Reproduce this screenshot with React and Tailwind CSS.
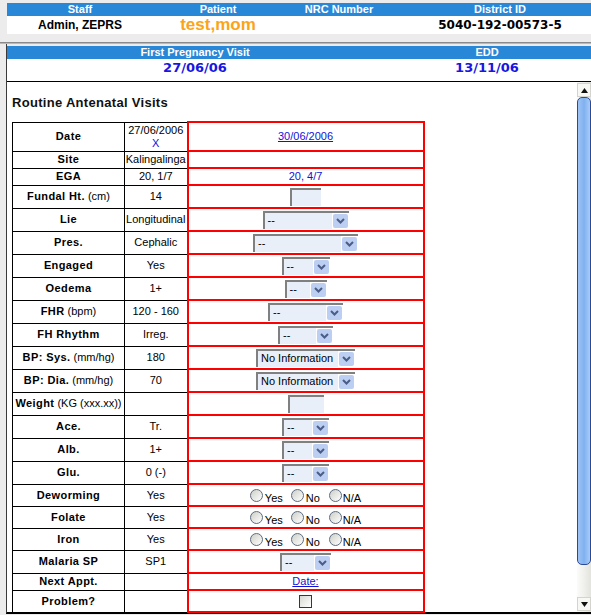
import React from "react";

const SANS = "font-['Liberation_Sans',Arial,sans-serif]";
const WIDE = "font-['DejaVu_Sans',Verdana,sans-serif]";

// dropdown like the old XP selects
function Select({ w, value = "--" }) {
  return (
    <div className={`${w} mx-auto flex h-[18px] border-t-2 border-l-2 border-[#808080] bg-white`}>
      <span className="flex-1 overflow-hidden whitespace-nowrap bg-[#e9eff9] pl-[3px] text-left text-[11px] leading-[15px] text-black">
        {value}
      </span>
      <span className="m-[1px] flex w-[15px] items-center justify-center rounded-[2px] bg-[#bccff2]">
        <svg width="9" height="6" viewBox="0 0 9 6">
          <path d="M1 1 L4.5 4.5 L8 1" fill="none" stroke="#4a5d86" strokeWidth="2" />
        </svg>
      </span>
    </div>
  );
}

function TextBox({ w }) {
  return <div className={`${w} mx-auto h-[18px] border-t-2 border-l-2 border-[#808080] bg-[#e9eff9]`} />;
}

function Radio() {
  return (
    <span className="inline-block h-[13px] w-[13px] rounded-full border border-[#5d6d80] bg-gradient-to-br from-[#cfcfc8] to-white" />
  );
}

function Radios() {
  return (
    <div className="flex items-end justify-center text-[11px] leading-[11px] text-black">
      <Radio />
      <span className="ml-[2px] mr-[8px] translate-y-[2px]">Yes</span>
      <Radio />
      <span className="ml-[2px] mr-[9px] translate-y-[2px]">No</span>
      <Radio />
      <span className="ml-[1px] translate-y-[2px]">N/A</span>
    </div>
  );
}

function Checkbox() {
  return (
    <span className="mx-auto block h-[13px] w-[13px] border border-[#1f3b5e] bg-gradient-to-br from-[#d8d8d2] to-white" />
  );
}

const LINK = "text-[#1212d6]";

const rows = [
  {
    label: "Date",
    h: "h-[29px]",
    prev: (
      <span className="block leading-[13px]">
        27/06/2006
        <br />
        <span className={LINK}>X</span>
      </span>
    ),
    cur: <a className={`${LINK} underline`}>30/06/2006</a>,
  },
  { label: "Site", h: "h-[17px]", prev: "Kalingalinga", cur: null },
  { label: "EGA", h: "h-[17px]", prev: "20, 1/7", cur: <span className={LINK}>20, 4/7</span> },
  { label: "Fundal Ht.", unit: "(cm)", prev: "14", cur: <TextBox w="w-[31px]" /> },
  { label: "Lie", prev: "Longitudinal", cur: <Select w="w-[86px]" /> },
  { label: "Pres.", prev: "Cephalic", cur: <Select w="w-[105px]" /> },
  { label: "Engaged", prev: "Yes", cur: <Select w="w-[48px]" /> },
  { label: "Oedema", prev: "1+", cur: <Select w="w-[42px]" /> },
  { label: "FHR", unit: "(bpm)", prev: "120 - 160", cur: <Select w="w-[75px]" /> },
  { label: "FH Rhythm", prev: "Irreg.", cur: <Select w="w-[55px]" /> },
  { label: "BP: Sys.", unit: "(mm/hg)", prev: "180", cur: <Select w="w-[99px]" value="No Information" /> },
  { label: "BP: Dia.", unit: "(mm/hg)", prev: "70", cur: <Select w="w-[99px]" value="No Information" /> },
  { label: "Weight", unit: "(KG (xxx.xx))", prev: "", cur: <TextBox w="w-[36px]" /> },
  { label: "Ace.", prev: "Tr.", cur: <Select w="w-[47px]" /> },
  { label: "Alb.", prev: "1+", cur: <Select w="w-[47px]" /> },
  { label: "Glu.", prev: "0 (-)", cur: <Select w="w-[47px]" /> },
  { label: "Deworming", h: "h-[22px]", prev: "Yes", cur: <Radios /> },
  { label: "Folate", h: "h-[22px]", prev: "Yes", cur: <Radios /> },
  { label: "Iron", h: "h-[22px]", prev: "Yes", cur: <Radios /> },
  { label: "Malaria SP", prev: "SP1", cur: <Select w="w-[51px]" /> },
  { label: "Next Appt.", h: "h-[17px]", prev: "", cur: <a className={`${LINK} underline`}>Date:</a> },
  { label: "Problem?", h: "h-[22px]", prev: "", cur: <Checkbox /> },
];

function Scrollbar() {
  return (
    <div className="flex w-[14px] flex-col bg-gradient-to-r from-[#fbfbf9] to-[#e4e4de] pt-[1px]">
      <div className="flex h-[14px] items-center justify-center border border-[#d4d4cc] bg-[#f7f7f4]">
        <svg width="7" height="5" viewBox="0 0 7 5">
          <path d="M3.5 0 L7 5 L0 5 Z" fill="#111" />
        </svg>
      </div>
      <div className="h-[468px] rounded-[5px] border border-[#2b4a94] bg-gradient-to-r from-[#9fc4f6] via-[#7fb1f0] to-[#a8cbf7]" />
      <div className="flex-1" />
      <div className="mb-[1px] flex h-[14px] items-center justify-center border border-[#d4d4cc] bg-[#f7f7f4]">
        <svg width="7" height="5" viewBox="0 0 7 5">
          <path d="M0 0 L7 0 L3.5 5 Z" fill="#111" />
        </svg>
      </div>
    </div>
  );
}

export default function App() {
  return (
    <div className={`${SANS} h-[615px] w-[591px] overflow-hidden bg-[#ececec] pt-[3px]`}>
      {/* patient banner */}
      <div className="ml-[7px] overflow-hidden">
        <div className="grid w-[598px] grid-cols-[146px_130px_112px_210px]">
          {["Staff", "Patient", "NRC Number", "District ID"].map((t) => (
            <div key={t} className="h-[13px] bg-[#2987d7] text-center text-[11px] font-bold leading-[13px] text-white">
              {t}
            </div>
          ))}
          <div className="h-[18px] bg-white text-center text-[12px] font-bold leading-[18px] text-black">Admin, ZEPRS</div>
          <div className="h-[18px] bg-white text-center text-[17px] font-bold leading-[18px] text-[#fba418]">test,mom</div>
          <div className="h-[18px] bg-white" />
          <div className={`${WIDE} h-[18px] bg-white text-center text-[12px] font-bold leading-[18px] text-black`}>
            5040-192-00573-5
          </div>
        </div>
      </div>

      <div className="h-[8px]" />
      <div className="h-[1px] bg-[#8a8a8a]" />
      <div className="h-[1px] bg-[#b9b9b9]" />

      {/* visit panel */}
      <div className="ml-[6px] border-b-2 border-l border-black border-l-[#3a3a3a] pt-[2px]">
        <div className="grid grid-cols-[376px_1fr]">
          <div className="h-[13px] bg-[#2987d7] text-center text-[11px] font-bold leading-[13px] text-white">
            First Pregnancy Visit
          </div>
          <div className="h-[13px] bg-[#2987d7] text-center text-[11px] font-bold leading-[13px] text-white">EDD</div>
          <div className={`${WIDE} h-[22px] bg-white pt-[1px] text-center text-[13px] font-bold leading-[15px] text-[#1717e0]`}>
            27/06/06
          </div>
          <div className={`${WIDE} h-[22px] bg-white pt-[1px] text-center text-[13px] font-bold leading-[15px] text-[#1717e0]`}>
            13/11/06
          </div>
        </div>
        <div className="h-[1px] bg-black" />

        <div className="flex h-[530px]">
          <div className="flex-1 bg-white pl-[5px] pt-[13px]">
            <h2 className="mb-[10px] text-[13px] font-bold leading-[16px] tracking-[0.3px] text-[#111]">
              Routine Antenatal Visits
            </h2>
            <table className="w-[411px] table-fixed border-collapse text-[11px] leading-[13px] text-black">
              <colgroup>
                <col className="w-[112px]" />
                <col className="w-[63px]" />
                <col className="w-[236px]" />
              </colgroup>
              <tbody>
                {rows.map((r) => (
                  <tr key={r.label} className={r.h || "h-[23px]"}>
                    <td className="whitespace-nowrap border border-black p-0 text-center">
                      <span className="font-bold tracking-[0.4px]">{r.label}</span>
                      {r.unit && <span> {r.unit}</span>}
                    </td>
                    <td className="whitespace-nowrap border border-black p-0 text-center">{r.prev}</td>
                    <td className="border-2 border-[#ff0000] p-0 text-center">{r.cur}</td>
                  </tr>
                ))}
              </tbody>
            </table>
          </div>
          <Scrollbar />
        </div>
      </div>
    </div>
  );
}
